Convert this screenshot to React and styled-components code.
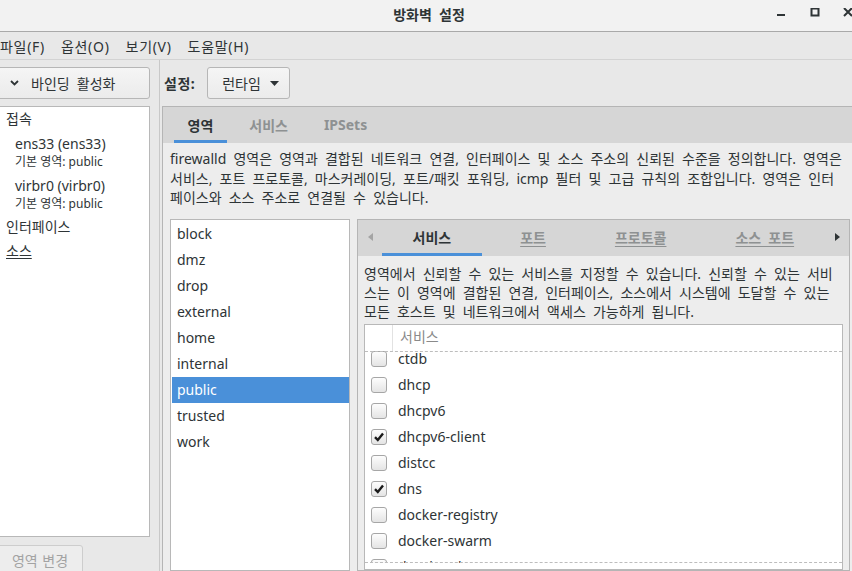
import React from "react";
import styled, { createGlobalStyle } from "styled-components";

const GlobalStyle = createGlobalStyle`
  html, body {
    margin: 0;
    padding: 0;
    overflow: hidden;
    background: #e8e8e8;
  }
  body {
    font-family: "Noto Sans", "Noto Sans CJK KR", sans-serif;
    font-size: 14px;
    color: #2e3436;
    word-spacing: 3.5px;
  }
`;

const zones = ["block", "dmz", "drop", "external", "home", "internal", "public", "trusted", "work"];

const services = [
  { name: "ctdb", on: false },
  { name: "dhcp", on: false },
  { name: "dhcpv6", on: false },
  { name: "dhcpv6-client", on: true },
  { name: "distcc", on: false },
  { name: "dns", on: true },
  { name: "docker-registry", on: false },
  { name: "docker-swarm", on: false },
  { name: "dropbox-lansync", on: false },
];

const App = () => {
  return (
    <>
      <GlobalStyle />
      <Window>
        <TitleBar>
          <span />
          <Title>방화벽 설정</Title>
          <Controls>
            <ControlButton>
              <svg width="10" height="10" viewBox="0 0 10 10">
                <rect x="1" y="6" width="8" height="2" fill="#2e3436" />
              </svg>
            </ControlButton>
            <ControlButton>
              <svg width="10" height="10" viewBox="0 0 10 10">
                <rect x="1.5" y="0.5" width="7" height="7" fill="none" stroke="#2e3436" strokeWidth="2" />
              </svg>
            </ControlButton>
            <ControlButton>
              <svg width="10" height="10" viewBox="0 0 10 10">
                <path d="M1 0 L9 8 M9 0 L1 8" stroke="#2e3436" strokeWidth="2" />
              </svg>
            </ControlButton>
          </Controls>
        </TitleBar>

        <MenuBar>
          <MenuItem>파일(F)</MenuItem>
          <MenuItem>옵션(O)</MenuItem>
          <MenuItem>보기(V)</MenuItem>
          <MenuItem>도움말(H)</MenuItem>
        </MenuBar>

        <Main>
          <LeftPane>
            <BindButton>
              <svg width="9" height="6" viewBox="0 0 9 6">
                <path d="M1 1 L4.5 4.5 L8 1" fill="none" stroke="#2e3436" strokeWidth="1.8" />
              </svg>
              바인딩 활성화
            </BindButton>
            <Tree>
              <TreeRow>접속</TreeRow>
              <Connection>
                <ConnName>ens33 (ens33)</ConnName>
                <ConnZone>기본 영역: public</ConnZone>
              </Connection>
              <Connection>
                <ConnName>virbr0 (virbr0)</ConnName>
                <ConnZone>기본 영역: public</ConnZone>
              </Connection>
              <TreeRow>인터페이스</TreeRow>
              <TreeRow $underline>소스</TreeRow>
            </Tree>
            <ChangeButton disabled>영역 변경</ChangeButton>
          </LeftPane>

          <Handle />

          <RightPane>
            <Toolbar>
              <Label>설정:</Label>
              <Dropdown>
                런타임
                <svg width="9" height="5" viewBox="0 0 9 5">
                  <path d="M0 0 L9 0 L4.5 5 Z" fill="#2e3436" />
                </svg>
              </Dropdown>
            </Toolbar>

            <Notebook>
              <TabBar $pad={11} $gap={9}>
                <Tab $active $pad={13.5}>영역</Tab>
                <Tab $pad={13.5}>서비스</Tab>
                <Tab $pad={13.5}>IPSets</Tab>
              </TabBar>
              <NotebookBody>
                <Description $lh={19.5}>
                  firewalld 영역은 영역과 결합된 네트워크 연결, 인터페이스 및 소스 주소의 신뢰된 수준을 정의합니다. 영역은
                  <br />
                  서비스, 포트 프로토콜, 마스커레이딩, 포트/패킷 포워딩, icmp 필터 및 고급 규칙의 조합입니다. 영역은 인터
                  <br />
                  페이스와 소스 주소로 연결될 수 있습니다.
                </Description>
                <ZoneRow>
                  <ZoneList>
                    {zones.map((z) => (
                      <ZoneItem key={z} $selected={z === "public"}>
                        {z}
                      </ZoneItem>
                    ))}
                  </ZoneList>

                  <InnerNotebook>
                    <InnerTabBar>
                      <Arrow>
                        <svg width="5" height="8" viewBox="0 0 5 8">
                          <path d="M5 0 L5 8 L0 4 Z" fill="#a4a4a4" />
                        </svg>
                      </Arrow>
                      <Tabs>
                        <Tab $active $pad={30.5}>서비스</Tab>
                        <Tab $pad={30.5} $underline>포트</Tab>
                        <Tab $pad={30.5} $underline>프로토콜</Tab>
                        <Tab $pad={30.5} $underline>소스 포트</Tab>
                      </Tabs>
                      <Arrow>
                        <svg width="5" height="8" viewBox="0 0 5 8">
                          <path d="M0 0 L0 8 L5 4 Z" fill="#2e3436" />
                        </svg>
                      </Arrow>
                    </InnerTabBar>
                    <InnerBody>
                      <Description $lh={19}>
                        영역에서 신뢰할 수 있는 서비스를 지정할 수 있습니다. 신뢰할 수 있는 서비
                        <br />
                        스는 이 영역에 결합된 연결, 인터페이스, 소스에서 시스템에 도달할 수 있는
                        <br />
                        모든 호스트 및 네트워크에서 액세스 가능하게 됩니다.
                      </Description>
                      <ServiceTable>
                        <TableHeader>
                          <HeaderCheck />
                          <HeaderLabel>서비스</HeaderLabel>
                        </TableHeader>
                        <ScrollArea>
                          <Rows>
                            {services.map((s) => (
                              <ServiceRow key={s.name}>
                                <Checkbox>
                                  {s.on && (
                                    <svg width="12" height="12" viewBox="0 0 12 12">
                                      <path d="M2 6.2 L4.8 9 L10 2.6" fill="none" stroke="#1a1a1a" strokeWidth="2.4" />
                                    </svg>
                                  )}
                                </Checkbox>
                                {s.name}
                              </ServiceRow>
                            ))}
                          </Rows>
                          <Undershoot $edge="top" />
                          <Undershoot $edge="bottom" />
                        </ScrollArea>
                      </ServiceTable>
                    </InnerBody>
                  </InnerNotebook>
                </ZoneRow>
              </NotebookBody>
            </Notebook>
          </RightPane>
        </Main>
      </Window>
    </>
  );
};

const Window = styled.div`
  width: 858px;
  height: 577px;
  display: flex;
  flex-direction: column;
  overflow: hidden;
  background: #e8e8e8;
`;

const TitleBar = styled.div`
  height: 31px;
  flex: none;
  display: grid;
  grid-template-columns: 1fr auto 1fr;
  align-items: center;
  background: #f2f2f2;
  border-bottom: 1px solid #a9a9a9;
`;

const Title = styled.div`
  font-weight: bold;
  font-size: 14px;
  color: #2e3436;
  padding-bottom: 3px;
`;

const Controls = styled.div`
  justify-self: end;
  display: flex;
  margin-right: -7px;
`;

const ControlButton = styled.div`
  width: 33.5px;
  height: 20px;
  display: flex;
  align-items: center;
  justify-content: center;
  padding-bottom: 5px;
`;

const MenuBar = styled.div`
  height: 27px;
  flex: none;
  display: flex;
  align-items: center;
  margin-left: -8px;
  background: #e8e8e8;
  border-bottom: 1px solid #d3d3d3;
`;

const MenuItem = styled.div`
  padding: 0 8px;
  font-size: 14px;
  letter-spacing: 0.7px;
  color: #2e3436;
`;

const Main = styled.div`
  flex: 1;
  min-height: 0;
  display: flex;
`;

const LeftPane = styled.div`
  width: 153px;
  margin-left: -3px;
  flex: none;
  display: flex;
  flex-direction: column;
  padding-top: 7px;
`;

const BindButton = styled.div`
  height: 32px;
  box-sizing: border-box;
  display: flex;
  align-items: center;
  gap: 12px;
  padding-left: 12px;
  border: 1px solid #b6b6b6;
  border-radius: 3px;
  background: linear-gradient(#f5f5f5, #ebebeb);
  font-size: 14px;
`;

const Tree = styled.div`
  flex: 1;
  margin-top: 7px;
  background: #fff;
  border: 1px solid #b8b8b8;
`;

const TreeRow = styled.div`
  height: 24px;
  line-height: 24px;
  padding-left: 8px;
  text-decoration: ${({ $underline }) => ($underline ? "underline" : "none")};
  text-underline-offset: 2px;
`;

const Connection = styled.div`
  padding: 3px 0 2px 17px;
  word-spacing: normal;
`;

const ConnName = styled.div`
  height: 19px;
  line-height: 19px;
`;

const ConnZone = styled.div`
  height: 18px;
  line-height: 18px;
  font-size: 12px;
`;

const ChangeButton = styled.button`
  height: 32px;
  width: 86px;
  margin-top: 8px;
  flex: none;
  border: 1px solid #cdcdcd;
  border-radius: 3px;
  background: #ededed;
  color: #a3a3a3;
  font-family: inherit;
  font-size: 14px;
  word-spacing: 1px;
  padding: 0 0 2px;
`;

const Handle = styled.div`
  width: 9px;
  flex: none;
  border-right: 1px solid #c8c8c8;
`;

const RightPane = styled.div`
  flex: 1;
  min-width: 0;
  display: flex;
  flex-direction: column;
  padding: 7px 0 0 2px;
`;

const Toolbar = styled.div`
  height: 32px;
  flex: none;
  display: flex;
  align-items: center;
  gap: 12px;
  padding-left: 2px;
`;

const Label = styled.span`
  font-weight: bold;
  letter-spacing: 0.5px;
`;

const Dropdown = styled.div`
  height: 32px;
  width: 83px;
  box-sizing: border-box;
  display: flex;
  align-items: center;
  gap: 9px;
  padding-left: 14px;
  border: 1px solid #b6b6b6;
  border-radius: 3px;
  background: linear-gradient(#f5f5f5, #ebebeb);
`;

const Notebook = styled.div`
  flex: 1;
  min-height: 0;
  margin-top: 7px;
  display: flex;
  flex-direction: column;
  border: 1px solid #b5b5b5;
  background: #ededed;
`;

const TabBar = styled.div`
  height: 36px;
  flex: none;
  display: flex;
  gap: ${({ $gap }) => $gap}px;
  padding-left: ${({ $pad }) => $pad}px;
  background: #d6d6d6;
`;

const Tab = styled.div`
  height: 100%;
  flex: none;
  display: flex;
  align-items: center;
  padding: 0 ${({ $pad }) => $pad}px 1px;
  box-sizing: border-box;
  font-weight: bold;
  color: ${({ $active }) => ($active ? "#2e3436" : "#8e9192")};
  box-shadow: ${({ $active }) => ($active ? "inset 0 -3px 0 #4a90d9" : "none")};
  text-decoration: ${({ $underline }) => ($underline ? "underline" : "none")};
  text-underline-offset: 3px;
`;

const NotebookBody = styled.div`
  flex: 1;
  min-height: 0;
  display: flex;
  flex-direction: column;
  padding: 6px 7px 5px 7px;
`;

const Description = styled.p`
  margin: 0;
  line-height: ${({ $lh }) => $lh}px;
  white-space: nowrap;
  flex: none;
`;

const ZoneRow = styled.div`
  flex: 1;
  min-height: 0;
  display: flex;
  gap: 7px;
  margin-top: 11px;
`;

const ZoneList = styled.div`
  width: 177px;
  flex: none;
  background: #fff;
  border: 1px solid #b8b8b8;
  padding: 1px 0 0 1px;
`;

const ZoneItem = styled.div`
  height: 26px;
  line-height: 26px;
  padding-left: 5px;
  background: ${({ $selected }) => ($selected ? "#4a90d9" : "transparent")};
  color: ${({ $selected }) => ($selected ? "#fff" : "#2e3436")};
`;

const InnerNotebook = styled.div`
  flex: 1;
  min-width: 0;
  display: flex;
  flex-direction: column;
  border: 1px solid #b5b5b5;
  background: #ededed;
`;

const InnerTabBar = styled.div`
  height: 36px;
  flex: none;
  display: flex;
  background: #d6d6d6;
`;

const Arrow = styled.div`
  width: 24px;
  flex: none;
  display: flex;
  align-items: center;
  justify-content: center;
  padding-bottom: 2px;
`;

const Tabs = styled.div`
  flex: 1;
  min-width: 0;
  display: flex;
  gap: 8px;
  overflow: hidden;
`;

const InnerBody = styled.div`
  flex: 1;
  min-height: 0;
  display: flex;
  flex-direction: column;
  padding: 8px 6px 0 6px;
`;

const ServiceTable = styled.div`
  flex: 1;
  min-height: 0;
  margin-top: 3px;
  display: flex;
  flex-direction: column;
  background: #fff;
  border: 1px solid #b8b8b8;
  padding-bottom: 6px;
`;

const TableHeader = styled.div`
  height: 26px;
  flex: none;
  display: flex;
  align-items: center;
`;

const HeaderCheck = styled.div`
  width: 27px;
  height: 100%;
  border-right: 1px solid #e2e2e2;
`;

const HeaderLabel = styled.div`
  padding: 0 0 3px 7px;
  color: #8a8a8a;
`;

const ScrollArea = styled.div`
  flex: 1;
  min-height: 0;
  overflow: hidden;
  position: relative;
`;

const Rows = styled.div`
  margin-top: -5px;
`;

const ServiceRow = styled.div`
  height: 26px;
  display: flex;
  align-items: center;
  gap: 11px;
  padding-left: 6px;
`;

const Checkbox = styled.span`
  width: 16px;
  height: 16px;
  box-sizing: border-box;
  flex: none;
  display: flex;
  align-items: center;
  justify-content: center;
  border: 1px solid #a6a6a6;
  border-radius: 3px;
  background: linear-gradient(#fdfdfd, #e4e4e4);
`;

const Undershoot = styled.div`
  position: absolute;
  left: 0;
  right: 0;
  ${({ $edge }) => ($edge === "top" ? "top: 0;" : "bottom: 0;")}
  border-top: 1px dashed #bdbdbd;
`;

export default App;
